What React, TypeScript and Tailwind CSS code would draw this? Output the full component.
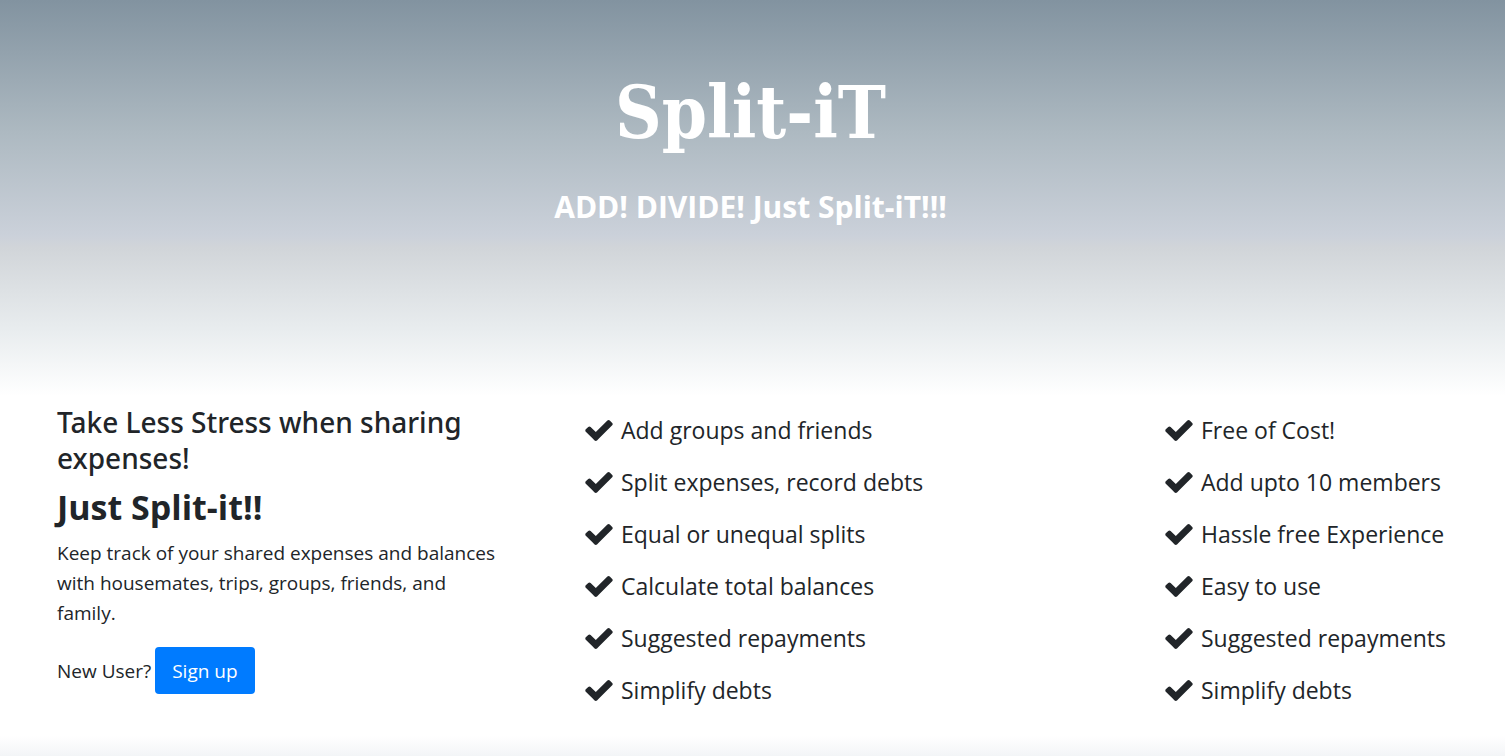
type FeatureListProps = { label: string; items: string[] };

const mainFeatures = [
  "Add groups and friends",
  "Split expenses, record debts",
  "Equal or unequal splits",
  "Calculate total balances",
  "Suggested repayments",
  "Simplify debts",
];

const extraFeatures = [
  "Free of Cost!",
  "Add upto 10 members",
  "Hassle free Experience",
  "Easy to use",
  "Suggested repayments",
  "Simplify debts",
];

function CheckIcon() {
  return (
    <svg viewBox="121 334 1550 1188" className="h-[21px] w-7 shrink-0" fill="currentColor" aria-hidden="true">
      <path d="M1671 566q0 40-28 68l-724 724-136 136q-28 28-68 28t-68-28l-136-136-362-362q-28-28-28-68t28-68l136-136q28-28 68-28t68 28l294 295 656-657q28-28 68-28t68 28l136 136q28 28 28 68z" />
    </svg>
  );
}

function FeatureList({ label, items }: FeatureListProps) {
  return (
    <ul aria-label={label} className="flex flex-col gap-4 pt-3 text-[23px] leading-9">
      {items.map((item) => (
        <li key={item} className="flex items-center gap-2 whitespace-nowrap">
          <CheckIcon />
          {item}
        </li>
      ))}
    </ul>
  );
}

export default function App() {
  return (
    <div className="flex min-h-screen flex-col bg-white font-['Open_Sans','Noto_Sans',sans-serif] text-[#212529]">
      <header className="flex h-[400px] flex-col items-center bg-[linear-gradient(to_bottom,#8293a0_0%,#adb9c1_33%,#cbd1da_59%,#d1d5d9_62%,#e9edef_83%,#ffffff_99%)] pt-[59px] pr-1 text-center text-white">
        <h1 className="font-['DejaVu_Serif_Condensed','DejaVu_Serif',serif] text-[72px] leading-[108px] font-bold">Split-iT</h1>
        <p className="mt-5 text-[30px] leading-10 font-bold">ADD! DIVIDE! Just Split-iT!!!</p>
      </header>

      <main className="grid grow grid-cols-[444px_1fr_284px] pr-14 pb-6 pl-[57px]">
        <section>
          <h2 className="pt-1 font-['Noto_Sans','Open_Sans',sans-serif] text-[28px] leading-9 font-medium">
            Take Less Stress when sharing expenses!
          </h2>
          <p className="mt-2 text-[34px] leading-[46px] font-bold">Just Split-it!!</p>
          <p className="mt-2 text-[19px] leading-[30px]">
            Keep track of your shared expenses and balances with housemates, trips, groups, friends, and family.
          </p>
          <div className="mt-[19px] flex items-center gap-1 text-[19px] leading-[30px]">
            <span>New User?</span>
            <button type="button" className="h-[47px] rounded bg-[#007bff] px-[17px] text-white">
              Sign up
            </button>
          </div>
        </section>
        <section className="pl-[84px]">
          <FeatureList label="Features" items={mainFeatures} />
        </section>
        <section>
          <FeatureList label="Benefits" items={extraFeatures} />
        </section>
      </main>

      <footer className="h-5 bg-linear-to-b from-white to-[#f3f5f7]" />
    </div>
  );
}
